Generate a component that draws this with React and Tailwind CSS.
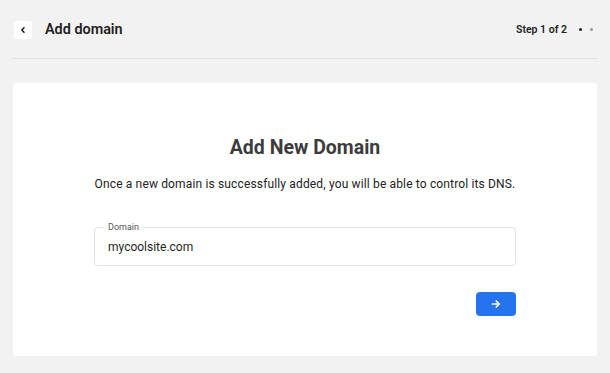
export default function App() {
  return (
    <div
      className="min-h-screen w-full bg-[#f2f2f2] px-[12px]"
      style={{ fontFamily: "Roboto, 'Noto Sans', sans-serif" }}
    >
      {/* header */}
      <div className="flex h-[59px] items-center border-b border-[#e2e2e2] pt-[1px]">
        <button className="ml-[2px] flex h-[18px] w-[18px] items-center justify-center rounded-[3px] bg-white">
          <svg width="8" height="8" viewBox="0 0 8 8" fill="none">
            <path d="M5 1.8 L2.8 4 L5 6.2" stroke="#222" strokeWidth="1.6" strokeLinecap="round" strokeLinejoin="round" />
          </svg>
        </button>
        <h1 className="ml-[13px] text-[14.4px] font-semibold text-[#1f1f1f]">Add domain</h1>
        <div className="ml-auto mr-[5px] flex items-center">
          <span className="text-[10.5px] font-semibold text-[#222]">Step 1 of 2</span>
          <span className="ml-[12px] h-[3px] w-[3px] rounded-full bg-[#222]" />
          <span className="ml-[8px] h-[3px] w-[3px] rounded-full bg-[#9a9a9a]" />
        </div>
      </div>

      {/* card */}
      <div className="mt-[24px] ml-[1px] mr-[1px] flex flex-col items-center rounded-[3px] bg-white pb-[40px] pt-[52px]">
        <h2 className="text-[19.5px] font-bold leading-[26px] text-[#3c3c3c]">Add New Domain</h2>
        <p className="mt-[15px] text-[12px] tracking-[0.15px] leading-[16px] text-[#222]">
          Once a new domain is successfully added, you will be able to control its DNS.
        </p>

        <div className="relative mt-[35px] w-[422px]">
          <div className="flex h-[39px] items-center rounded-[4px] border border-[#e2e2e2] px-[13px] pt-[1px]">
            <span className="text-[12px] text-[#1f1f1f]">mycoolsite.com</span>
          </div>
          <span className="absolute left-[10px] top-[-6px] bg-white px-[4px] text-[9px] leading-[12px] text-[#555]">
            Domain
          </span>
        </div>

        <div className="mt-[26px] flex w-[422px] justify-end">
          <button className="flex h-[24px] w-[40px] items-center justify-center rounded-[4px] bg-[#2673f0]">
            <svg width="10" height="10" viewBox="0 0 10 10" fill="none">
              <path d="M1.5 5 H8 M5.2 2 L8.2 5 L5.2 8" stroke="white" strokeWidth="1.7" strokeLinecap="round" strokeLinejoin="round" />
            </svg>
          </button>
        </div>
      </div>
    </div>
  );
}
